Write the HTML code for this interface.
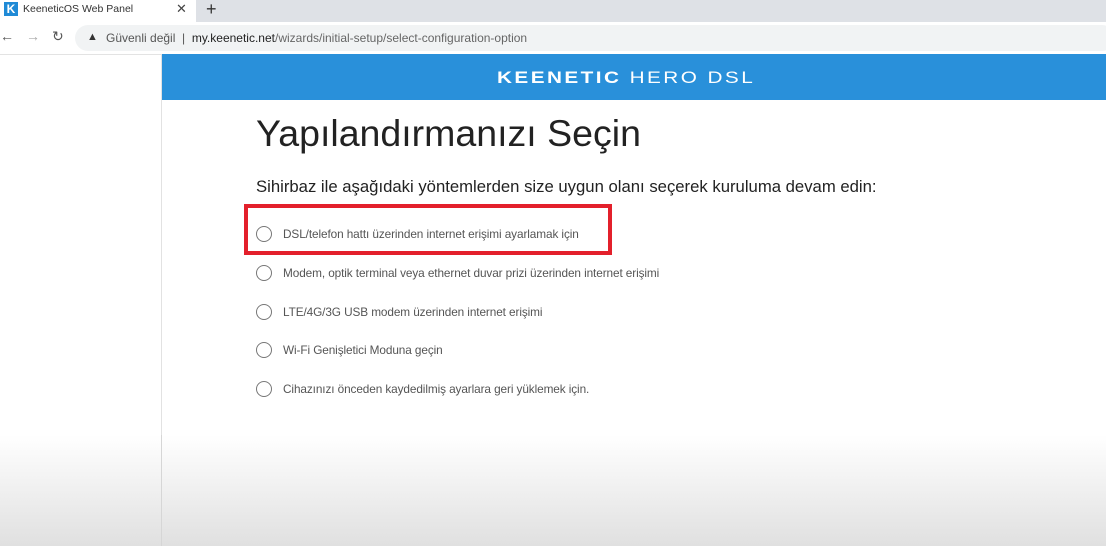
<!DOCTYPE html>
<html><head><meta charset="utf-8"><style>
body{margin:0;width:1106px;height:546px;overflow:hidden;font-family:"Liberation Sans",sans-serif;position:relative;background:#fff}
.abs{position:absolute}
.opt{position:absolute;left:256px;font-size:11.8px;color:#555;height:18px;line-height:18px}
.opt i{position:absolute;left:0;top:1px;width:14px;height:14px;border:1.3px solid #777;border-radius:50%}
.opt span{position:absolute;left:27px;white-space:nowrap;letter-spacing:-0.1px}
</style></head><body>
<div class="abs" style="left:0;top:0;width:1106px;height:22px;background:#dee1e6"></div>
<div class="abs" style="left:0;top:0;width:196px;height:22px;background:#fff"></div>
<div class="abs" style="left:4px;top:2px;width:14px;height:14px;background:#1f8ad6;color:#fff;font:bold 12px/14px 'Liberation Sans';text-align:center">K</div>
<div class="abs" style="left:23px;top:3px;font-size:10.5px;color:#333">KeeneticOS Web Panel</div>
<div class="abs" style="left:176px;top:1px;font-size:13px;color:#444">✕</div>
<div class="abs" style="left:206px;top:-1px;font-size:18px;color:#333">+</div>
<div class="abs" style="left:0;top:22px;width:1106px;height:32px;background:#fff;border-bottom:1px solid #e3e3e3"></div>
<div class="abs" style="left:0;top:28px;font-size:14px;color:#555">←</div>
<div class="abs" style="left:26px;top:28px;font-size:14px;color:#aaa">→</div>
<div class="abs" style="left:52px;top:28px;font-size:14px;color:#555">↻</div>
<div class="abs" style="left:75px;top:25px;width:1040px;height:26px;border-radius:13px;background:#f1f3f4"></div>
<div class="abs" style="left:87px;top:31px;font-size:11px;color:#333">▲</div>
<div class="abs" style="left:106px;top:31px;font-size:12px;color:#555">Güvenli değil &nbsp;|&nbsp; <span style="color:#222">my.keenetic.net</span><span style="color:#666">/wizards/initial-setup/select-configuration-option</span></div>
<div class="abs" style="left:161px;top:55px;width:945px;height:491px;border-left:1px solid #e2e2e2"></div>
<div class="abs" style="left:0;top:435px;width:1106px;height:111px;background:linear-gradient(#fff,#e0e0e0)"></div>
<div class="abs" style="left:161px;top:435px;width:1px;height:111px;background:#d6d6d6"></div>
<div class="abs" style="left:162px;top:54px;width:944px;height:46px;background:#2990da"></div>
<div class="abs" style="left:497px;top:68px;font-size:17px;color:#fff;letter-spacing:2px;white-space:nowrap;transform:scaleX(1.22);transform-origin:left"><b>KEENETIC</b> <span>HERO DSL</span></div>
<div class="abs" style="left:256px;top:112px;font-size:37.5px;color:#222;white-space:nowrap">Yapılandırmanızı Seçin</div>
<div class="abs" style="left:256px;top:177px;font-size:16.7px;color:#222;white-space:nowrap">Sihirbaz ile aşağıdaki yöntemlerden size uygun olanı seçerek kuruluma devam edin:</div>
<div class="abs" style="left:244px;top:204px;width:360px;height:43px;border:4px solid #e3202b"></div>
<div class="opt" style="top:225px"><i></i><span>DSL/telefon hattı üzerinden internet erişimi ayarlamak için</span></div>
<div class="opt" style="top:264px"><i></i><span>Modem, optik terminal veya ethernet duvar prizi üzerinden internet erişimi</span></div>
<div class="opt" style="top:303px"><i></i><span>LTE/4G/3G USB modem üzerinden internet erişimi</span></div>
<div class="opt" style="top:341px"><i></i><span>Wi-Fi Genişletici Moduna geçin</span></div>
<div class="opt" style="top:380px"><i></i><span>Cihazınızı önceden kaydedilmiş ayarlara geri yüklemek için.</span></div>
</body></html>
